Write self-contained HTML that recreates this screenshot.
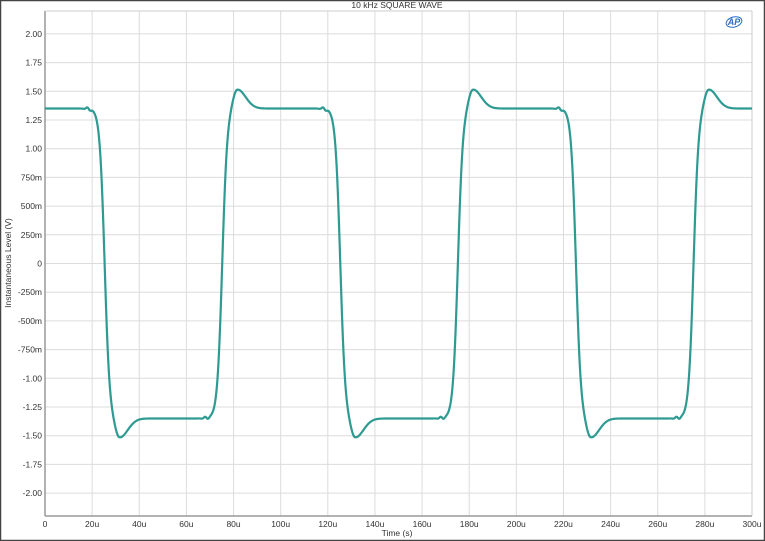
<!DOCTYPE html>
<html><head><meta charset="utf-8"><style>
html,body{margin:0;padding:0;width:765px;height:541px;overflow:hidden;background:#fff}
svg{display:block}
text{font-family:"Liberation Sans",sans-serif;fill:#333}
</style></head><body>
<svg id="s" width="765" height="541" xmlns="http://www.w3.org/2000/svg">
<rect x="0.5" y="0.5" width="764" height="540" fill="#fff" stroke="#444" stroke-width="1.5"/>
<g id="grid" stroke="#dcdcdc" stroke-width="1"></g>
<line x1="45" y1="11" x2="45" y2="516" stroke="#999" stroke-width="1.5"/>
<line x1="45" y1="516" x2="752" y2="516" stroke="#999" stroke-width="1.5"/>
<line x1="752" y1="11" x2="752" y2="516" stroke="#ccc"/>
<line x1="45" y1="11" x2="752" y2="11" stroke="#ccc"/>
<text x="397" y="8" font-size="8.5" text-anchor="middle">10 kHz SQUARE WAVE</text>
<text x="397" y="536" font-size="8.5" text-anchor="middle">Time (s)</text>
<text transform="translate(11,263) rotate(-90)" font-size="8.5" text-anchor="middle">Instantaneous Level (V)</text>
<g id="yl" font-size="8.5" text-anchor="end"></g>
<g id="xl" font-size="8.5" text-anchor="middle"></g>
<path id="w" fill="none" stroke="#2e9a92" stroke-width="2.2" stroke-linejoin="round"/>
<g transform="translate(734,22)">
<ellipse cx="0" cy="0" rx="8" ry="5" fill="none" stroke="#2a6fc0" stroke-width="1" transform="rotate(-15)"/>
<text x="0" y="3" font-size="9" font-style="italic" font-weight="bold" text-anchor="middle" style="fill:#2a6fc0">AP</text>
</g>
</svg>
<script>
var NS="http://www.w3.org/2000/svg";
function X(t){return 45+t*707/300;}
function Y(v){return 263.5-v*114.8/1;}
var g=document.getElementById('grid'),yl=document.getElementById('yl'),xl=document.getElementById('xl');
var labs=["2.00","1.75","1.50","1.25","1.00","750m","500m","250m","0","-250m","-500m","-750m","-1.00","-1.25","-1.50","-1.75","-2.00"];
for(var i=0;i<17;i++){var v=2-i*0.25,y=Y(v);
var l=document.createElementNS(NS,'line');l.setAttribute('x1',45);l.setAttribute('x2',752);l.setAttribute('y1',y);l.setAttribute('y2',y);g.appendChild(l);
var t=document.createElementNS(NS,'text');t.setAttribute('x',42);t.setAttribute('y',y+3);t.textContent=labs[i];yl.appendChild(t);}
for(var k=0;k<=15;k++){var x=X(k*20);
if(k>0&&k<15){var l=document.createElementNS(NS,'line');l.setAttribute('y1',11);l.setAttribute('y2',516);l.setAttribute('x1',x);l.setAttribute('x2',x);g.appendChild(l);}
var t=document.createElementNS(NS,'text');t.setAttribute('x',x);t.setAttribute('y',527);t.textContent=k==0?"0":(k*20)+"u";xl.appendChild(t);}
function sig(x){return 1/(1+Math.exp(-x));}
function bump(t,p){var d=t-p;var w=d<0?2.5:5;return Math.exp(-(d/w)*(d/w));}
function V(t){
 var v=1.35;
 for(var c=0;c<3;c++){var b=c*100;
  v-=2.7*sig((t-(b+25.3))/1.05);
  v+=2.7*sig((t-(b+75.2))/1.05);
  v-=0.17*bump(t,b+31.5);
  v+=0.17*bump(t,b+81.5);
  v+=0.015*Math.sin((t-b-17)*2)*Math.exp(-Math.pow((t-b-18.5)/1.5,2));
  v+=0.015*Math.sin((t-b-67)*2)*Math.exp(-Math.pow((t-b-68.5)/1.5,2));
 }
 return v;}
var d="";for(var t=0;t<=300;t+=0.2){d+=(t==0?"M":"L")+X(t).toFixed(2)+" "+Y(V(t)).toFixed(2);}
document.getElementById('w').setAttribute('d',d);
</script>
</body></html>
